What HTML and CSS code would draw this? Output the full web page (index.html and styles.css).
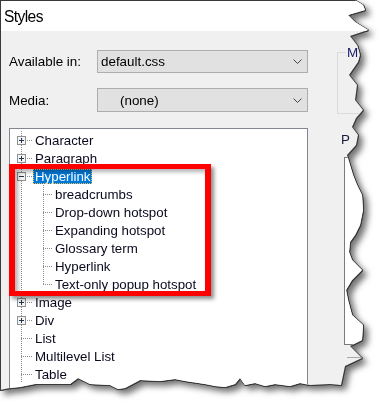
FILE: index.html
```html
<!DOCTYPE html>
<html>
<head>
<meta charset="utf-8">
<link rel="stylesheet" href="styles.css">
</head>
<body>
<div class="sheet">
  <div class="dialog">
    <div class="titlebar">Styles</div>
    <div class="body">
      <div class="main">
        <div class="field">
          <span class="flabel">Available in:</span>
          <div class="combo"><span class="cval">default.css</span>
            <svg class="chev" width="9" height="5" viewBox="0 0 9 5"><polyline points="0.5,0.5 4.5,4.5 8.5,0.5" fill="none" stroke="#444" stroke-width="1"/></svg>
          </div>
        </div>
        <div class="field field2">
          <span class="flabel">Media:</span>
          <div class="combo"><span class="cval cval2">(none)</span>
            <svg class="chev" width="9" height="5" viewBox="0 0 9 5"><polyline points="0.5,0.5 4.5,4.5 8.5,0.5" fill="none" stroke="#444" stroke-width="1"/></svg>
          </div>
        </div>
        <div class="tree">
          <div class="row"><span class="gutter g-top"><span class="box plus"></span></span><span class="label">Character</span></div>
          <div class="row"><span class="gutter g-top"><span class="box plus"></span></span><span class="label">Paragraph</span></div>
          <div class="row"><span class="gutter g-top"><span class="box minus"></span></span><span class="label selected">Hyperlink</span></div>
          <div class="row"><span class="gutter g-child"></span><span class="label">breadcrumbs</span></div>
          <div class="row"><span class="gutter g-child"></span><span class="label">Drop-down hotspot</span></div>
          <div class="row"><span class="gutter g-child"></span><span class="label">Expanding hotspot</span></div>
          <div class="row"><span class="gutter g-child"></span><span class="label">Glossary term</span></div>
          <div class="row"><span class="gutter g-child"></span><span class="label">Hyperlink</span></div>
          <div class="row"><span class="gutter g-child g-last"></span><span class="label">Text-only popup hotspot</span></div>
          <div class="row"><span class="gutter g-top"><span class="box plus"></span></span><span class="label">Image</span></div>
          <div class="row"><span class="gutter g-top"><span class="box plus"></span></span><span class="label">Div</span></div>
          <div class="row"><span class="gutter g-top"></span><span class="label">List</span></div>
          <div class="row"><span class="gutter g-top"></span><span class="label">Multilevel List</span></div>
          <div class="row"><span class="gutter g-top"></span><span class="label">Table</span></div>
        </div>
      </div>
      <div class="side">
        <div class="group"><span class="legend">M</span></div>
        <div class="plabel">P</div>
        <div class="listbox"></div>
        <div class="stub"></div>
      </div>
    </div>
    <div class="callout"></div>
  </div>
</div>
</body>
</html>
```
FILE: styles.css
```css
html, body {
  margin: 0;
  padding: 0;
  background: #fff;
}
body {
  width: 389px;
  height: 417px;
  overflow: hidden;
  font-family: "Liberation Sans", Arial, sans-serif;
  color: #000;
}
.sheet {
  width: 372px;
  height: 395px;
  filter: drop-shadow(1px 0 0 #3a3a3a) drop-shadow(0 1px 0 #3a3a3a) drop-shadow(4px 4px 3px rgba(0,0,0,0.55));
}
.dialog {
  position: relative;
  width: 370px;
  height: 392px;
  box-sizing: border-box;
  border-top: 1px solid #3a3a3a;
  border-left: 1px solid #3a3a3a;
  background: #f0f0f0;
  overflow: hidden;
  clip-path: polygon(0px 0px, 355px 0px, 363px 5px, 365px 10px, 348px 15px, 355px 22px, 368px 30px, 350px 36px, 357px 45px, 360px 55px, 358px 62px, 349px 75px, 357px 85px, 355px 100px, 363px 110px, 356px 118px, 352px 127px, 358px 135px, 356px 145px, 347px 155px, 350px 165px, 353px 175px, 357px 185px, 362px 195px, 363px 210px, 360px 225px, 355px 235px, 350px 242px, 349px 252px, 352px 260px, 356px 264px, 362px 270px, 352px 280px, 346px 290px, 348px 300px, 352px 315px, 363px 325px, 362px 340px, 350px 346px, 362px 358px, 345px 366px, 341px 385px, 330px 384px, 310px 385px, 300px 383px, 290px 386px, 275px 384px, 265px 386px, 255px 383px, 245px 385px, 240px 378px, 235px 384px, 225px 387px, 215px 386px, 205px 384px, 185px 381px, 175px 379px, 160px 381px, 140px 380px, 125px 388px, 118px 389px, 110px 385px, 90px 384px, 78px 378px, 70px 384px, 50px 384px, 35px 384px, 20px 387px, 10px 388px, 0px 390px);
}
.titlebar {
  height: 30px;
  background: #fff;
  font-size: 15.6px;
  line-height: 32px;
  padding-left: 3px;
  letter-spacing: -0.6px;
}
.body {
  display: flex;
  padding: 19px 0 0 8px;
  gap: 29px;
}
.main {
  width: 299px;
  flex: none;
  display: flex;
  flex-direction: column;
}
.field {
  display: flex;
  align-items: center;
  height: 23px;
}
.field2 {
  margin-top: 15px;
  height: 24px;
}
.flabel {
  width: 88px;
  flex: none;
  font-size: 13.4px;
}
.combo {
  flex: 1;
  align-self: stretch;
  display: flex;
  align-items: center;
  justify-content: space-between;
  box-sizing: border-box;
  border: 1px solid #adadad;
  background: #e1e1e1;
  padding: 0 5px 0 3px;
  font-size: 13.4px;
}
.cval2 {
  padding-left: 19px;
}
.chev {
  display: block;
}
.tree {
  margin-top: 16px;
  height: 275px;
  box-sizing: border-box;
  border: 1px solid #828790;
  background: #fff;
  padding-top: 2px;
}
.row {
  display: flex;
  align-items: center;
  height: 18px;
  font-size: 13.3px;
}
.gutter {
  flex: none;
  height: 18px;
  display: flex;
  align-items: center;
  background-repeat: no-repeat;
}
.g-top {
  width: 23px;
  background-image:
    repeating-linear-gradient(to bottom, #8c8c8c 0 1px, transparent 1px 2px),
    repeating-linear-gradient(to right, #8c8c8c 0 1px, transparent 1px 2px);
  background-size: 1px 18px, 12px 1px;
  background-position: 11px 0, 11px 9px;
}
.g-child {
  width: 43px;
  background-image:
    repeating-linear-gradient(to bottom, #8c8c8c 0 1px, transparent 1px 2px),
    repeating-linear-gradient(to bottom, #8c8c8c 0 1px, transparent 1px 2px),
    repeating-linear-gradient(to right, #8c8c8c 0 1px, transparent 1px 2px);
  background-size: 1px 18px, 1px 18px, 10px 1px;
  background-position: 11px 0, 33px 0, 33px 9px;
}
.g-last {
  background-size: 1px 18px, 1px 10px, 10px 1px;
}
.box {
  margin-left: 7px;
  width: 9px;
  height: 9px;
  box-sizing: border-box;
  border: 1px solid #919191;
  background-color: #f4f4f4;
  background-repeat: no-repeat;
}
.plus {
  background-image: linear-gradient(#1f3550, #1f3550), linear-gradient(#1f3550, #1f3550);
  background-size: 5px 1px, 1px 5px;
  background-position: 1px 3px, 3px 1px;
}
.minus {
  background-image: linear-gradient(#1f3550, #1f3550);
  background-size: 5px 1px;
  background-position: 1px 3px;
}
.label {
  display: block;
  padding: 0 2px;
  line-height: 15px;
  white-space: nowrap;
  color: #0a0a1e;
}
.selected {
  background: #0078d7;
  color: #fff;
  outline: 1px dotted #e8c060;
  outline-offset: -1px;
}
.side {
  width: 60px;
  flex: none;
  display: flex;
  flex-direction: column;
}
.group {
  position: relative;
  margin-top: 2px;
  height: 62px;
  box-sizing: border-box;
  border: 1px solid #dcdcdc;
}
.legend {
  position: absolute;
  top: -8px;
  left: 8px;
  padding: 0 1px;
  background: #f0f0f0;
  font-size: 13.4px;
  line-height: 15px;
  color: #1a1a6a;
}
.plabel {
  margin-top: 18px;
  margin-left: 4px;
  font-size: 13.4px;
  line-height: 16px;
  color: #1a1a40;
}
.listbox {
  margin-top: 9px;
  margin-left: 7px;
  height: 188px;
  box-sizing: border-box;
  border: 1px solid #7a7a7a;
  background: #fff;
}
.stub {
  margin-top: 12px;
  margin-left: 10px;
  border-top: 1px solid #a8a8a8;
  height: 20px;
}
.callout {
  position: absolute;
  left: 8px;
  top: 163px;
  width: 202px;
  height: 132px;
  box-sizing: border-box;
  border-style: solid;
  border-color: #ff0000;
  border-width: 5px 6px;
  box-shadow: 3px 3px 4px rgba(0,0,0,0.45), inset 3px 3px 4px rgba(0,0,0,0.3);
}
```
